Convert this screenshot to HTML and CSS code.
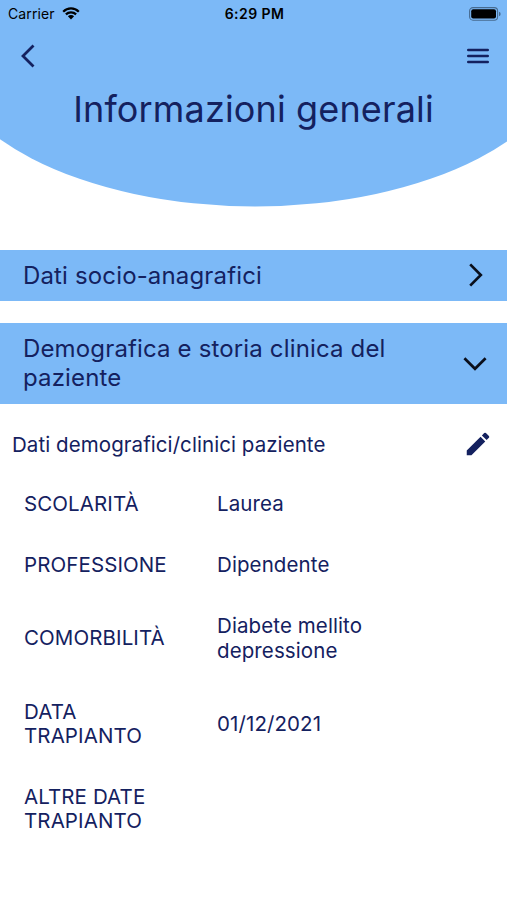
FILE: index.html
```html
<!DOCTYPE html>
<html lang="it">
<head>
    <meta charset="UTF-8">
    <meta name="viewport" content="width=device-width, initial-scale=1.0">
    <title>Informazioni generali</title>
    <link rel="stylesheet" href="styles.css">
</head>
<body>
    <!-- Header Section -->
    <header class="header">
        <div class="status-bar">
            <div class="carrier">
                <span>Carrier</span>
                <svg class="wifi" width="18" height="13" viewBox="0 0 18 13">
                    <path d="M1.2 4.7a11 11 0 0 1 15.6 0M3.9 7.4a7.2 7.2 0 0 1 10.2 0" fill="none" stroke="#000" stroke-width="2.2"/>
                    <path d="M9 12.4L5.9 9.3a4.4 4.4 0 0 1 6.2 0z"/>
                </svg>
            </div>
            <span class="time">6:29 PM</span>
            <svg class="battery" width="32" height="14" viewBox="0 0 32 14">
                <rect x="0.6" y="0.6" width="28" height="12.6" rx="3.4" fill="none" stroke="#476b90" stroke-width="1.1"/>
                <rect x="2.2" y="2.2" width="24.8" height="9.4" rx="2"/>
                <path d="M30 4.8a2.3 2.3 0 0 1 0 4.4z" fill="#476b90"/>
            </svg>
        </div>
        <nav class="nav-bar">
            <svg width="16" height="26" viewBox="0 0 16 26">
                <path d="M13.5 2.5L3 13l10.5 10.5" fill="none" stroke="#14215f" stroke-width="2.8"/>
            </svg>
            <svg width="22" height="16" viewBox="0 0 22 16">
                <path d="M1.2 2h19.6M1.2 8h19.6M1.2 14h19.6" stroke="#14215f" stroke-width="2.4" stroke-linecap="round"/>
            </svg>
        </nav>
        <h1>Informazioni generali</h1>
    </header>

    <!-- Accordion Section -->
    <main>
        <div class="section">
            <h2>Dati socio-anagrafici</h2>
            <svg width="26" height="26" viewBox="0 0 26 26">
                <path d="M8.2 2.4L18.8 13 8.2 23.6" fill="none" stroke="#0a0f1c" stroke-width="2.7"/>
            </svg>
        </div>
        <div class="section open">
            <h2>Demografica e storia clinica del paziente</h2>
            <svg width="26" height="26" viewBox="0 0 26 26">
                <path d="M2.4 8.2L13 18.8 23.6 8.2" fill="none" stroke="#0a0f1c" stroke-width="2.7"/>
            </svg>
        </div>

        <div class="panel-title">
            <h3>Dati demografici/clinici paziente</h3>
            <svg width="30" height="30" viewBox="0 0 24 24">
                <path d="M3 17.25V21h3.75L17.81 9.94l-3.75-3.75L3 17.25zM20.71 7.04a1 1 0 0 0 0-1.41l-2.34-2.34a1 1 0 0 0-1.41 0l-1.83 1.83 3.75 3.75 1.83-1.83z" fill="#14215f"/>
            </svg>
        </div>

        <dl class="details">
            <div class="row">
                <dt>SCOLARITÀ</dt>
                <dd>Laurea</dd>
            </div>
            <div class="row">
                <dt>PROFESSIONE</dt>
                <dd>Dipendente</dd>
            </div>
            <div class="row">
                <dt>COMORBILITÀ</dt>
                <dd>Diabete mellito<br>depressione</dd>
            </div>
            <div class="row">
                <dt>DATA TRAPIANTO</dt>
                <dd>01/12/2021</dd>
            </div>
            <div class="row">
                <dt>ALTRE DATE TRAPIANTO</dt>
                <dd></dd>
            </div>
        </dl>
    </main>
</body>
</html>
```

FILE: styles.css
```css
body {
    font-family: 'Inter', sans-serif;
    margin: 0;
    background-color: #fff;
    color: #14215f;
}

h1, h2, h3, dl, dd {
    margin: 0;
    font-weight: 400;
}

svg {
    display: block;
    flex-shrink: 0;
}

/* Header Styles */
.header {
    height: 207px;
    background-color: #7cb9f7;
    clip-path: ellipse(316px 164px at 50.3% 42.5px); /* Curved bottom edge */
}

.status-bar {
    display: grid;
    grid-template-columns: 1fr auto 1fr;
    align-items: center;
    height: 27px;
    padding: 0 6px 0 8px;
    font-size: 14px;
    color: #000;
}

.carrier {
    display: flex;
    align-items: center;
    gap: 7px;
    letter-spacing: 0.1px;
}

.time {
    font-weight: 600;
    letter-spacing: 0.45px;
}

.battery {
    justify-self: end;
}

.nav-bar {
    display: flex;
    align-items: center;
    justify-content: space-between;
    height: 58px;
    padding: 0 18.5px 0 20px;
}

h1 {
    text-align: center;
    font-size: 36px;
    line-height: 48px;
    letter-spacing: 0.15px;
}

/* Accordion Styles */
.section {
    display: flex;
    align-items: center;
    justify-content: space-between;
    margin-top: 22px;
    padding: 11px 19px 11px 23px;
    background-color: #7cb9f7;
}

.section:first-child {
    margin-top: 42.5px;
}

.section h2 {
    width: 380px;
    font-size: 24px;
    line-height: 29.4px;
    letter-spacing: 0.15px;
}

/* Panel Styles */
.panel-title {
    display: flex;
    align-items: center;
    justify-content: space-between;
    padding: 25.5px 14.5px 0 12px;
}

.panel-title h3 {
    font-size: 20.5px;
    letter-spacing: 0.07px;
}

.details {
    display: flex;
    flex-direction: column;
    gap: 36.6px;
    padding: 33px 24px 0;
    font-size: 20.5px;
    line-height: 24.4px;
    letter-spacing: 0.1px;
}

.row {
    display: grid;
    grid-template-columns: 150px 1fr;
    column-gap: 43px;
    align-items: center;
}
```
